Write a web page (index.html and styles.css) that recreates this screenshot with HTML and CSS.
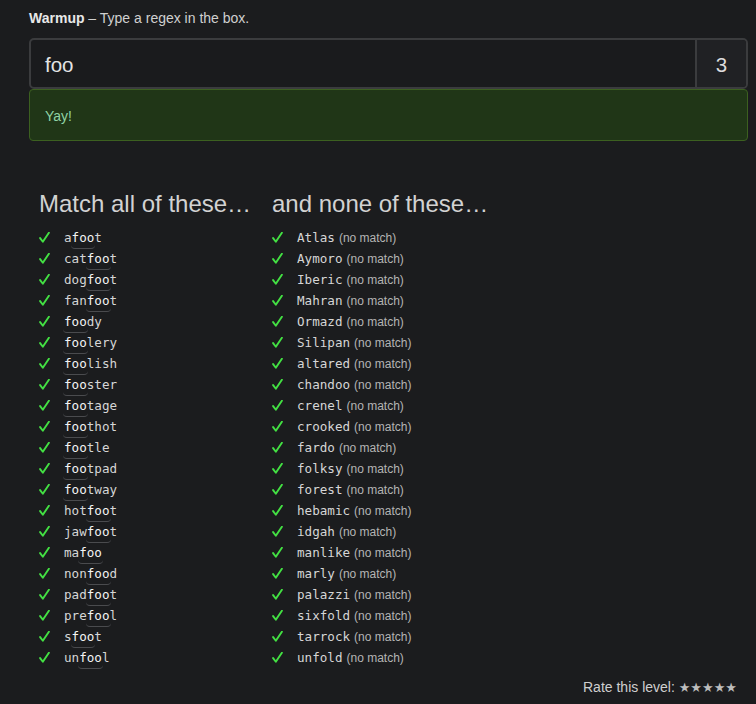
FILE: index.html
```html
<!DOCTYPE html>
<html>
<head>
<meta charset="utf-8">
<link rel="stylesheet" href="styles.css">
</head>
<body>
<div class="page">
  <div class="intro"><b>Warmup</b> – Type a regex in the box.</div>
  <div class="regex">
    <div class="field">foo</div>
    <div class="count">3</div>
  </div>
  <div class="success">Yay!</div>

  <div class="lists">
    <div class="col col-match">
      <h2>Match all of these…</h2>
      <ul>
        <li><span class="ok"><svg viewBox="0 0 12 12"><path d="M1.2 6.6 L4.2 10.6 L10.8 0.8"/></svg></span><code>a<span class="m">foo</span>t</code></li>
        <li><span class="ok"><svg viewBox="0 0 12 12"><path d="M1.2 6.6 L4.2 10.6 L10.8 0.8"/></svg></span><code>cat<span class="m">foo</span>t</code></li>
        <li><span class="ok"><svg viewBox="0 0 12 12"><path d="M1.2 6.6 L4.2 10.6 L10.8 0.8"/></svg></span><code>dog<span class="m">foo</span>t</code></li>
        <li><span class="ok"><svg viewBox="0 0 12 12"><path d="M1.2 6.6 L4.2 10.6 L10.8 0.8"/></svg></span><code>fan<span class="m">foo</span>t</code></li>
        <li><span class="ok"><svg viewBox="0 0 12 12"><path d="M1.2 6.6 L4.2 10.6 L10.8 0.8"/></svg></span><code><span class="m">foo</span>dy</code></li>
        <li><span class="ok"><svg viewBox="0 0 12 12"><path d="M1.2 6.6 L4.2 10.6 L10.8 0.8"/></svg></span><code><span class="m">foo</span>lery</code></li>
        <li><span class="ok"><svg viewBox="0 0 12 12"><path d="M1.2 6.6 L4.2 10.6 L10.8 0.8"/></svg></span><code><span class="m">foo</span>lish</code></li>
        <li><span class="ok"><svg viewBox="0 0 12 12"><path d="M1.2 6.6 L4.2 10.6 L10.8 0.8"/></svg></span><code><span class="m">foo</span>ster</code></li>
        <li><span class="ok"><svg viewBox="0 0 12 12"><path d="M1.2 6.6 L4.2 10.6 L10.8 0.8"/></svg></span><code><span class="m">foo</span>tage</code></li>
        <li><span class="ok"><svg viewBox="0 0 12 12"><path d="M1.2 6.6 L4.2 10.6 L10.8 0.8"/></svg></span><code><span class="m">foo</span>thot</code></li>
        <li><span class="ok"><svg viewBox="0 0 12 12"><path d="M1.2 6.6 L4.2 10.6 L10.8 0.8"/></svg></span><code><span class="m">foo</span>tle</code></li>
        <li><span class="ok"><svg viewBox="0 0 12 12"><path d="M1.2 6.6 L4.2 10.6 L10.8 0.8"/></svg></span><code><span class="m">foo</span>tpad</code></li>
        <li><span class="ok"><svg viewBox="0 0 12 12"><path d="M1.2 6.6 L4.2 10.6 L10.8 0.8"/></svg></span><code><span class="m">foo</span>tway</code></li>
        <li><span class="ok"><svg viewBox="0 0 12 12"><path d="M1.2 6.6 L4.2 10.6 L10.8 0.8"/></svg></span><code>hot<span class="m">foo</span>t</code></li>
        <li><span class="ok"><svg viewBox="0 0 12 12"><path d="M1.2 6.6 L4.2 10.6 L10.8 0.8"/></svg></span><code>jaw<span class="m">foo</span>t</code></li>
        <li><span class="ok"><svg viewBox="0 0 12 12"><path d="M1.2 6.6 L4.2 10.6 L10.8 0.8"/></svg></span><code>ma<span class="m">foo</span></code></li>
        <li><span class="ok"><svg viewBox="0 0 12 12"><path d="M1.2 6.6 L4.2 10.6 L10.8 0.8"/></svg></span><code>non<span class="m">foo</span>d</code></li>
        <li><span class="ok"><svg viewBox="0 0 12 12"><path d="M1.2 6.6 L4.2 10.6 L10.8 0.8"/></svg></span><code>pad<span class="m">foo</span>t</code></li>
        <li><span class="ok"><svg viewBox="0 0 12 12"><path d="M1.2 6.6 L4.2 10.6 L10.8 0.8"/></svg></span><code>pre<span class="m">foo</span>l</code></li>
        <li><span class="ok"><svg viewBox="0 0 12 12"><path d="M1.2 6.6 L4.2 10.6 L10.8 0.8"/></svg></span><code>s<span class="m">foo</span>t</code></li>
        <li><span class="ok"><svg viewBox="0 0 12 12"><path d="M1.2 6.6 L4.2 10.6 L10.8 0.8"/></svg></span><code>un<span class="m">foo</span>l</code></li>
      </ul>
    </div>
    <div class="col col-none">
      <h2>and none of these…</h2>
      <ul>
        <li><span class="ok"><svg viewBox="0 0 12 12"><path d="M1.2 6.6 L4.2 10.6 L10.8 0.8"/></svg></span><code>Atlas</code><span class="nm">(no match)</span></li>
        <li><span class="ok"><svg viewBox="0 0 12 12"><path d="M1.2 6.6 L4.2 10.6 L10.8 0.8"/></svg></span><code>Aymoro</code><span class="nm">(no match)</span></li>
        <li><span class="ok"><svg viewBox="0 0 12 12"><path d="M1.2 6.6 L4.2 10.6 L10.8 0.8"/></svg></span><code>Iberic</code><span class="nm">(no match)</span></li>
        <li><span class="ok"><svg viewBox="0 0 12 12"><path d="M1.2 6.6 L4.2 10.6 L10.8 0.8"/></svg></span><code>Mahran</code><span class="nm">(no match)</span></li>
        <li><span class="ok"><svg viewBox="0 0 12 12"><path d="M1.2 6.6 L4.2 10.6 L10.8 0.8"/></svg></span><code>Ormazd</code><span class="nm">(no match)</span></li>
        <li><span class="ok"><svg viewBox="0 0 12 12"><path d="M1.2 6.6 L4.2 10.6 L10.8 0.8"/></svg></span><code>Silipan</code><span class="nm">(no match)</span></li>
        <li><span class="ok"><svg viewBox="0 0 12 12"><path d="M1.2 6.6 L4.2 10.6 L10.8 0.8"/></svg></span><code>altared</code><span class="nm">(no match)</span></li>
        <li><span class="ok"><svg viewBox="0 0 12 12"><path d="M1.2 6.6 L4.2 10.6 L10.8 0.8"/></svg></span><code>chandoo</code><span class="nm">(no match)</span></li>
        <li><span class="ok"><svg viewBox="0 0 12 12"><path d="M1.2 6.6 L4.2 10.6 L10.8 0.8"/></svg></span><code>crenel</code><span class="nm">(no match)</span></li>
        <li><span class="ok"><svg viewBox="0 0 12 12"><path d="M1.2 6.6 L4.2 10.6 L10.8 0.8"/></svg></span><code>crooked</code><span class="nm">(no match)</span></li>
        <li><span class="ok"><svg viewBox="0 0 12 12"><path d="M1.2 6.6 L4.2 10.6 L10.8 0.8"/></svg></span><code>fardo</code><span class="nm">(no match)</span></li>
        <li><span class="ok"><svg viewBox="0 0 12 12"><path d="M1.2 6.6 L4.2 10.6 L10.8 0.8"/></svg></span><code>folksy</code><span class="nm">(no match)</span></li>
        <li><span class="ok"><svg viewBox="0 0 12 12"><path d="M1.2 6.6 L4.2 10.6 L10.8 0.8"/></svg></span><code>forest</code><span class="nm">(no match)</span></li>
        <li><span class="ok"><svg viewBox="0 0 12 12"><path d="M1.2 6.6 L4.2 10.6 L10.8 0.8"/></svg></span><code>hebamic</code><span class="nm">(no match)</span></li>
        <li><span class="ok"><svg viewBox="0 0 12 12"><path d="M1.2 6.6 L4.2 10.6 L10.8 0.8"/></svg></span><code>idgah</code><span class="nm">(no match)</span></li>
        <li><span class="ok"><svg viewBox="0 0 12 12"><path d="M1.2 6.6 L4.2 10.6 L10.8 0.8"/></svg></span><code>manlike</code><span class="nm">(no match)</span></li>
        <li><span class="ok"><svg viewBox="0 0 12 12"><path d="M1.2 6.6 L4.2 10.6 L10.8 0.8"/></svg></span><code>marly</code><span class="nm">(no match)</span></li>
        <li><span class="ok"><svg viewBox="0 0 12 12"><path d="M1.2 6.6 L4.2 10.6 L10.8 0.8"/></svg></span><code>palazzi</code><span class="nm">(no match)</span></li>
        <li><span class="ok"><svg viewBox="0 0 12 12"><path d="M1.2 6.6 L4.2 10.6 L10.8 0.8"/></svg></span><code>sixfold</code><span class="nm">(no match)</span></li>
        <li><span class="ok"><svg viewBox="0 0 12 12"><path d="M1.2 6.6 L4.2 10.6 L10.8 0.8"/></svg></span><code>tarrock</code><span class="nm">(no match)</span></li>
        <li><span class="ok"><svg viewBox="0 0 12 12"><path d="M1.2 6.6 L4.2 10.6 L10.8 0.8"/></svg></span><code>unfold</code><span class="nm">(no match)</span></li>
      </ul>
    </div>
  </div>

  <div class="rate">Rate this level: <span class="stars">★★★★★</span></div>
</div>
</body>
</html>
```

FILE: styles.css
```css
html, body {
  margin: 0;
  padding: 0;
  background: #1b1c1e;
}
body {
  font-family: "Liberation Sans", Arial, sans-serif;
  color: #cfcfcf;
}
.page {
  padding: 10px 8px 0 29px;
}
.intro {
  font-size: 14px;
  line-height: 16px;
  color: #d0d0d0;
}
.intro b {
  color: #e8e8e8;
}
.regex {
  margin-top: 12px;
  display: flex;
  height: 47px;
  border: 2px solid #3b3c3e;
  border-radius: 5px;
  background: #1a1b1d;
}
.field {
  flex: 1;
  padding: 2px 0 0 14px;
  font-size: 20.5px;
  line-height: 45px;
  color: #e4e4e4;
}
.count {
  width: 49px;
  padding-top: 2px;
  border-left: 2px solid #3b3c3e;
  background: #202124;
  border-radius: 0 4px 4px 0;
  text-align: center;
  font-size: 20.5px;
  line-height: 45px;
  color: #dcdcdc;
}
.success {
  height: 50px;
  border: 1px solid #3c6020;
  border-radius: 4px;
  background: #203617;
  color: #8fd3a4;
  font-size: 14px;
  line-height: 52px;
  padding-left: 15px;
}
.lists {
  display: flex;
  margin-top: 49px;
  padding-left: 10px;
}
.col-match {
  width: 233px;
}
.col h2 {
  margin: 0;
  font-weight: normal;
  font-size: 24px;
  line-height: 28px;
  color: #d2d2d2;
}
.col ul {
  list-style: none;
  margin: 9px 0 0;
  padding: 0;
}
.col li {
  display: flex;
  align-items: baseline;
  height: 21px;
  line-height: 21px;
  white-space: nowrap;
}
.ok {
  width: 25px;
  flex: none;
  align-self: center;
  display: flex;
  align-items: center;
}
.ok svg {
  width: 11px;
  height: 11px;
  fill: none;
  stroke: #43e043;
  stroke-width: 2.1;
  stroke-linecap: round;
  stroke-linejoin: round;
}
code {
  font-family: "DejaVu Sans Mono", monospace;
  font-size: 12.6px;
  color: #d6d6d6;
}
.m {
  color: #f4f4f4;
  border-bottom: 1px solid #4a4b4e;
  border-radius: 0 0 4px 4px;
  padding: 0 1px 3px;
  margin: 0 -1px;
}
.nm {
  margin-left: 4px;
  font-size: 12px;
  color: #b4b4b4;
}
.rate {
  text-align: right;
  margin-top: 10px;
  padding-right: 11px;
  font-size: 14px;
  line-height: 18px;
  color: #cfcfcf;
}
.stars {
  color: #bdbdbd;
  font-family: "DejaVu Sans", sans-serif;
  font-size: 13px;
}
```
